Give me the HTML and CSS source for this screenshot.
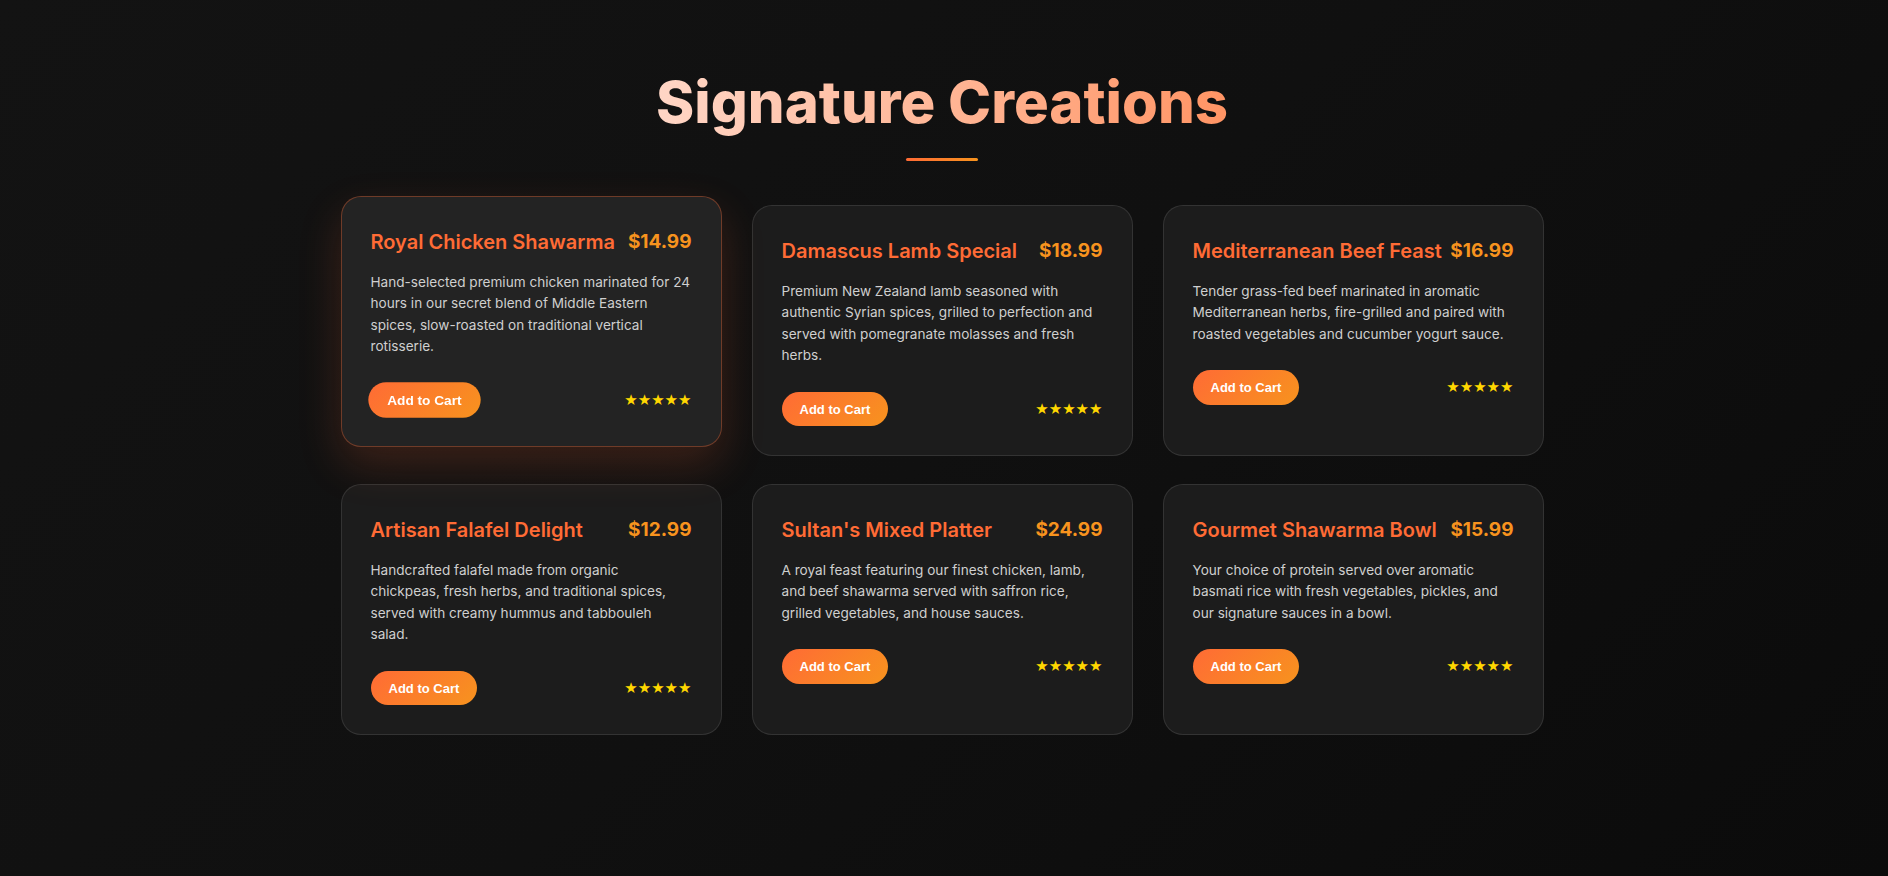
FILE: index.html
```html
<!DOCTYPE html>
<html lang="en">
<head>
<meta charset="utf-8">
<title>Signature Creations</title>
<link rel="stylesheet" href="styles.css">
</head>
<body>
<section class="menu">
  <h2 class="menu-title">Signature Creations</h2>
  <div class="menu-rule"></div>
  <div class="menu-grid">
    <article class="card card-active">
      <div class="card-head"><h3 class="card-name">Royal Chicken Shawarma</h3><span class="card-price">$14.99</span></div>
      <p class="card-desc">Hand-selected premium chicken marinated for 24 hours in our secret blend of Middle Eastern spices, slow-roasted on traditional vertical rotisserie.</p>
      <div class="card-foot"><button class="cart-btn">Add to Cart</button><span class="stars">★★★★★</span></div>
    </article>
    <article class="card">
      <div class="card-head"><h3 class="card-name">Damascus Lamb Special</h3><span class="card-price">$18.99</span></div>
      <p class="card-desc">Premium New Zealand lamb seasoned with authentic Syrian spices, grilled to perfection and served with pomegranate molasses and fresh herbs.</p>
      <div class="card-foot"><button class="cart-btn">Add to Cart</button><span class="stars">★★★★★</span></div>
    </article>
    <article class="card">
      <div class="card-head"><h3 class="card-name">Mediterranean Beef Feast</h3><span class="card-price">$16.99</span></div>
      <p class="card-desc">Tender grass-fed beef marinated in aromatic Mediterranean herbs, fire-grilled and paired with roasted vegetables and cucumber yogurt sauce.</p>
      <div class="card-foot"><button class="cart-btn">Add to Cart</button><span class="stars">★★★★★</span></div>
    </article>
    <article class="card">
      <div class="card-head"><h3 class="card-name">Artisan Falafel Delight</h3><span class="card-price">$12.99</span></div>
      <p class="card-desc">Handcrafted falafel made from organic chickpeas, fresh herbs, and traditional spices, served with creamy hummus and tabbouleh salad.</p>
      <div class="card-foot"><button class="cart-btn">Add to Cart</button><span class="stars">★★★★★</span></div>
    </article>
    <article class="card">
      <div class="card-head"><h3 class="card-name">Sultan's Mixed Platter</h3><span class="card-price">$24.99</span></div>
      <p class="card-desc">A royal feast featuring our finest chicken, lamb, and beef shawarma served with saffron rice, grilled vegetables, and house sauces.</p>
      <div class="card-foot"><button class="cart-btn">Add to Cart</button><span class="stars">★★★★★</span></div>
    </article>
    <article class="card">
      <div class="card-head"><h3 class="card-name">Gourmet Shawarma Bowl</h3><span class="card-price">$15.99</span></div>
      <p class="card-desc">Your choice of protein served over aromatic basmati rice with fresh vegetables, pickles, and our signature sauces in a bowl.</p>
      <div class="card-foot"><button class="cart-btn">Add to Cart</button><span class="stars">★★★★★</span></div>
    </article>
  </div>
</section>
</body>
</html>
```

FILE: styles.css
```css
* { box-sizing: border-box; }
html, body { margin: 0; padding: 0; }
body {
  min-height: 876px;
  background: linear-gradient(135deg, #131313 0%, #101010 50%, #0b0b0b 100%);
  font-family: Inter, "Noto Sans", sans-serif;
  color: #fff;
  line-height: 1.6;
}
.menu {
  padding: 68px 4px 60px 0;
  display: flex;
  flex-direction: column;
  align-items: center;
}
.menu-title {
  margin: 0;
  font-size: 58px;
  font-weight: 800;
  line-height: 1.2;
  background: linear-gradient(90deg, #ffd6c6 0%, #ffb696 50%, #ff9464 100%);
  -webkit-background-clip: text;
  background-clip: text;
  color: transparent;
}
.menu-rule {
  width: 72px;
  height: 3px;
  margin-top: 20px;
  border-radius: 2px;
  background: linear-gradient(90deg, #ff6b35, #f7931e);
}
.menu-grid {
  margin-top: 44px;
  display: grid;
  grid-template-columns: repeat(3, 381px);
  column-gap: 30px;
  row-gap: 28px;
}
.card {
  background: #1c1c1c;
  border: 1px solid rgba(255,255,255,0.1);
  border-radius: 20px;
  padding: 29px;
  height: 251px;
}
.card-active {
  transform: translateY(-9px);
  background: #232323;
  border-color: rgba(255,107,53,0.35);
  box-shadow: 0 18px 44px rgba(255,107,53,0.18);
}
.card-head {
  display: flex;
  justify-content: space-between;
  align-items: center;
}
.card-name {
  margin: 0;
  font-size: 20px;
  font-weight: 600;
  line-height: 32px;
  color: #ff6b35;
}
.card-price {
  font-size: 19px;
  font-weight: 700;
  line-height: 32px;
  color: #f7931e;
}
.card-desc {
  margin: 14px 0 0;
  font-size: 13.6px;
  line-height: 21.6px;
  color: #cfcfcf;
}
.card-foot {
  margin-top: 25px;
  display: flex;
  justify-content: space-between;
  align-items: center;
}
.cart-btn {
  border: 0;
  border-radius: 25px;
  padding: 9.6px 18px;
  font-family: "Liberation Sans", Arial, sans-serif;
  font-size: 13px;
  font-weight: 700;
  color: #fff;
  background: linear-gradient(135deg, #ff6b35, #f7931e);
}
.card-active .cart-btn { transform: scale(1.05); }
.stars {
  font-family: "DejaVu Sans", sans-serif;
  font-size: 15px;
  line-height: 1;
  color: #ffd700;
}
```
